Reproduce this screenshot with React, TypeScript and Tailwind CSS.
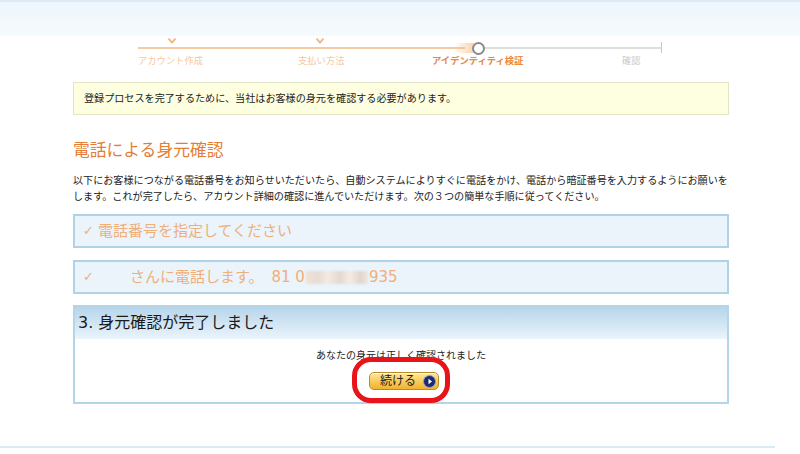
import React from "react";

const FONT = { fontFamily: '"DejaVu Sans", "Noto Sans CJK JP", sans-serif' };

function Chevron() {
  return (
    <svg width="8" height="6" viewBox="0 0 8 6">
      <polyline points="1,1.2 4,4.6 7,1.2" fill="none" stroke="#f0b47e" strokeWidth="1.8" strokeLinecap="round" strokeLinejoin="round" />
    </svg>
  );
}

function Blur() {
  return (
    <span className="inline-block w-[62px] h-[13px] align-middle mx-[1px] bg-[linear-gradient(90deg,#f1e2d3_0%,#e6ddd6_20%,#f3ebe3_35%,#e1d9d2_55%,#f4ece5_70%,#ded6cf_88%,#efe6dd_100%)] blur-[1px]" />
  );
}

export default function App() {
  return (
    <div className="w-[800px] h-[454px] bg-white overflow-hidden text-[#333]" style={FONT}>
      {/* top band */}
      <div className="h-[36px] border-t-2 border-[#dcebf6] bg-[linear-gradient(180deg,#eef6fc_0%,#f5fafd_100%)]" />

      {/* stepper */}
      <div className="ml-[138px] w-[524px]">
        <div className="h-[11px] pt-[2px] flex">
          <div className="ml-[30px]"><Chevron /></div>
          <div className="ml-[140px]"><Chevron /></div>
        </div>
        <div className="relative h-[2px] flex">
          <div className="w-[335px] h-[2px] bg-[#f5c9a2]" />
          <div className="w-[189px] h-[2px] bg-[#dedede] ml-[12px]" />
          <div className="absolute left-[316px] top-[-4px] w-[20px] h-[10px] bg-[linear-gradient(90deg,rgba(245,180,120,0)_0%,rgba(245,175,115,0.55)_100%)] rounded-l-full" />
          <div className="absolute left-[334px] top-[-5.5px] w-[13px] h-[13px] rounded-full border-2 border-[#8a8a8a] bg-white" />
          <div className="absolute right-0 top-[-5px] w-[1px] h-[11px] bg-[#c8c8c8]" />
        </div>
        <div className="mt-[6px] flex text-[9.3px] leading-[12px]">
          <div className="w-[160px] text-[#f6c8a2]">アカウント作成</div>
          <div className="w-[134px] text-[#f6c8a2]">支払い方法</div>
          <div className="w-[190px] font-bold text-[#e8893f]">アイデンティティ検証</div>
          <div className="text-[#c9c9c9]">確認</div>
        </div>
      </div>

      {/* content */}
      <div className="ml-[73px] w-[656px]">
        <div className="mt-[15px] h-[33px] border border-[#e4e4c6] bg-[#fefee0] flex items-center pl-[10px] text-[10.1px] text-[#222]">
          登録プロセスを完了するために、当社はお客様の身元を確認する必要があります。
        </div>

        <h1 className="mt-[25px] text-[16.8px] leading-[20px] text-[#e47e36]">電話による身元確認</h1>

        <p className="mt-[13px] text-[10.1px] leading-[16px] text-[#222] whitespace-nowrap">
          以下にお客様につながる電話番号をお知らせいただいたら、自動システムによりすぐに電話をかけ、電話から暗証番号を入力するようにお願いを
          <br />
          します。これが完了したら、アカウント詳細の確認に進んでいただけます。次の３つの簡単な手順に従ってください。
        </p>

        <div className="mt-[9px] h-[34px] border-2 border-[#b0d2e7] bg-[#ebf4fa] flex items-center pl-[8px] text-[15px] text-[#efaf7a]">
          <span className="text-[13px] mr-[4px]">✓</span>
          <span>電話番号を指定してください</span>
        </div>

        <div className="mt-[12px] h-[34px] border-2 border-[#b0d2e7] bg-[#ebf4fa] flex items-center pl-[8px] text-[15px] text-[#efaf7a] whitespace-nowrap">
          <span className="text-[13px] w-[47px]">✓</span>
          <span>さんに電話します。</span>
          <span className="ml-[8px]">81 0</span>
          <Blur />
          <span>935</span>
        </div>

        <div className="mt-[11px] h-[99px] border-2 border-[#b4d4e8] flex flex-col">
          <div className="h-[32px] bg-[linear-gradient(180deg,#b6d5ea_0%,#d6e8f5_60%,#eaf4fb_100%)] flex items-center pl-[3px] text-[16px] text-[#1a1a1a]">
            3. 身元確認が完了しました
          </div>
          <div className="flex-1 bg-white flex flex-col items-center pt-[10px]">
            <div className="text-[10px] leading-[14px] text-[#222]">あなたの身元は正しく確認されました</div>
            <div className="relative mt-[9px] ml-[6px]">
              <button className="w-[70px] h-[18px] rounded-[5px] border border-[#b9892b] bg-[linear-gradient(180deg,#fde7a0_0%,#f9cd5c_50%,#f1b22e_100%)] flex items-center pl-[10px] pr-[2px] shadow-[inset_0_1px_0_rgba(255,255,255,0.7)]">
                <span className="text-[12px] leading-[14px] text-[#222]">続ける</span>
                <span className="ml-auto w-[13px] h-[13px] rounded-full bg-[#1e2a6e] border border-[#8da0d0] flex items-center justify-center">
                  <svg width="6" height="7" viewBox="0 0 6 7">
                    <polygon points="1.5,0.8 5,3.5 1.5,6.2" fill="#ffffff" />
                  </svg>
                </span>
              </button>
              <div className="absolute left-[-17px] top-[-15px] w-[98px] h-[46px] rounded-[19px] border-[5px] border-[#e8141a] pointer-events-none" />
            </div>
          </div>
        </div>
      </div>

      <div className="mt-[42px] w-[775px] h-[2px] bg-[#dbebf6]" />
    </div>
  );
}
